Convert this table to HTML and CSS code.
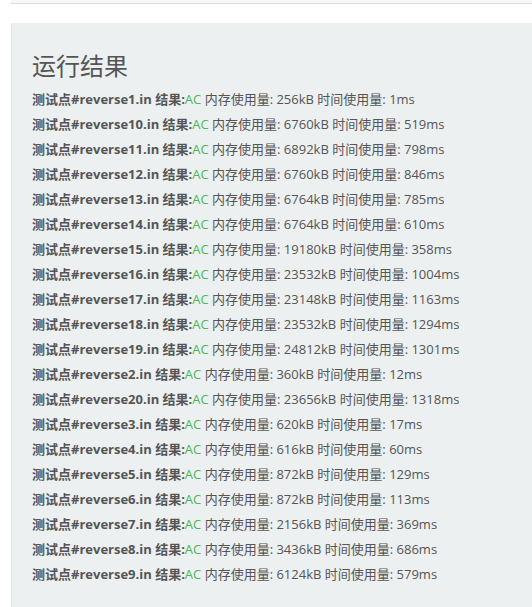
FILE: index.html
```html
<!DOCTYPE html>
<html lang="zh">
<head>
<meta charset="utf-8">
<link rel="stylesheet" href="styles.css">
</head>
<body>
<div class="topcard"></div>
<div class="well">
  <h3 class="title">运行结果</h3>
  <div class="results">
    <p><b>测试点#reverse1.in 结果:</b><span class="ac">AC</span> 内存使用量: 256kB 时间使用量: 1ms</p>
    <p><b>测试点#reverse10.in 结果:</b><span class="ac">AC</span> 内存使用量: 6760kB 时间使用量: 519ms</p>
    <p><b>测试点#reverse11.in 结果:</b><span class="ac">AC</span> 内存使用量: 6892kB 时间使用量: 798ms</p>
    <p><b>测试点#reverse12.in 结果:</b><span class="ac">AC</span> 内存使用量: 6760kB 时间使用量: 846ms</p>
    <p><b>测试点#reverse13.in 结果:</b><span class="ac">AC</span> 内存使用量: 6764kB 时间使用量: 785ms</p>
    <p><b>测试点#reverse14.in 结果:</b><span class="ac">AC</span> 内存使用量: 6764kB 时间使用量: 610ms</p>
    <p><b>测试点#reverse15.in 结果:</b><span class="ac">AC</span> 内存使用量: 19180kB 时间使用量: 358ms</p>
    <p><b>测试点#reverse16.in 结果:</b><span class="ac">AC</span> 内存使用量: 23532kB 时间使用量: 1004ms</p>
    <p><b>测试点#reverse17.in 结果:</b><span class="ac">AC</span> 内存使用量: 23148kB 时间使用量: 1163ms</p>
    <p><b>测试点#reverse18.in 结果:</b><span class="ac">AC</span> 内存使用量: 23532kB 时间使用量: 1294ms</p>
    <p><b>测试点#reverse19.in 结果:</b><span class="ac">AC</span> 内存使用量: 24812kB 时间使用量: 1301ms</p>
    <p><b>测试点#reverse2.in 结果:</b><span class="ac">AC</span> 内存使用量: 360kB 时间使用量: 12ms</p>
    <p><b>测试点#reverse20.in 结果:</b><span class="ac">AC</span> 内存使用量: 23656kB 时间使用量: 1318ms</p>
    <p><b>测试点#reverse3.in 结果:</b><span class="ac">AC</span> 内存使用量: 620kB 时间使用量: 17ms</p>
    <p><b>测试点#reverse4.in 结果:</b><span class="ac">AC</span> 内存使用量: 616kB 时间使用量: 60ms</p>
    <p><b>测试点#reverse5.in 结果:</b><span class="ac">AC</span> 内存使用量: 872kB 时间使用量: 129ms</p>
    <p><b>测试点#reverse6.in 结果:</b><span class="ac">AC</span> 内存使用量: 872kB 时间使用量: 113ms</p>
    <p><b>测试点#reverse7.in 结果:</b><span class="ac">AC</span> 内存使用量: 2156kB 时间使用量: 369ms</p>
    <p><b>测试点#reverse8.in 结果:</b><span class="ac">AC</span> 内存使用量: 3436kB 时间使用量: 686ms</p>
    <p><b>测试点#reverse9.in 结果:</b><span class="ac">AC</span> 内存使用量: 6124kB 时间使用量: 579ms</p>
  </div>
</div>
</body>
</html>
```
FILE: styles.css
```css
html, body {
  margin: 0;
  padding: 0;
  background: #ffffff;
  font-family: "Open Sans", "Noto Sans CJK SC", sans-serif;
  color: #555555;
}
.topcard {
  margin-left: 11px;
  height: 3px;
  background: #f7f7f7;
  border-bottom: 1px solid #dddddd;
}
.well {
  margin: 19px 0 0 11px;
  padding: 20px 20px 40px 20px;
  background: #ecf0f1;
  border-left: 1px solid #e3e6e7;
  border-top: 1px solid #eef0f0;
  min-height: 600px;
}
.title {
  margin: 4px 0 3px 0;
  font-size: 24px;
  font-weight: normal;
  line-height: 36px;
  color: #555555;
}
.results p {
  margin: 0;
  font-size: 13px;
  line-height: 25px;
  white-space: nowrap;
}
.results b {
  font-weight: 700;
}
.ac {
  color: #4cb752;
}
```
